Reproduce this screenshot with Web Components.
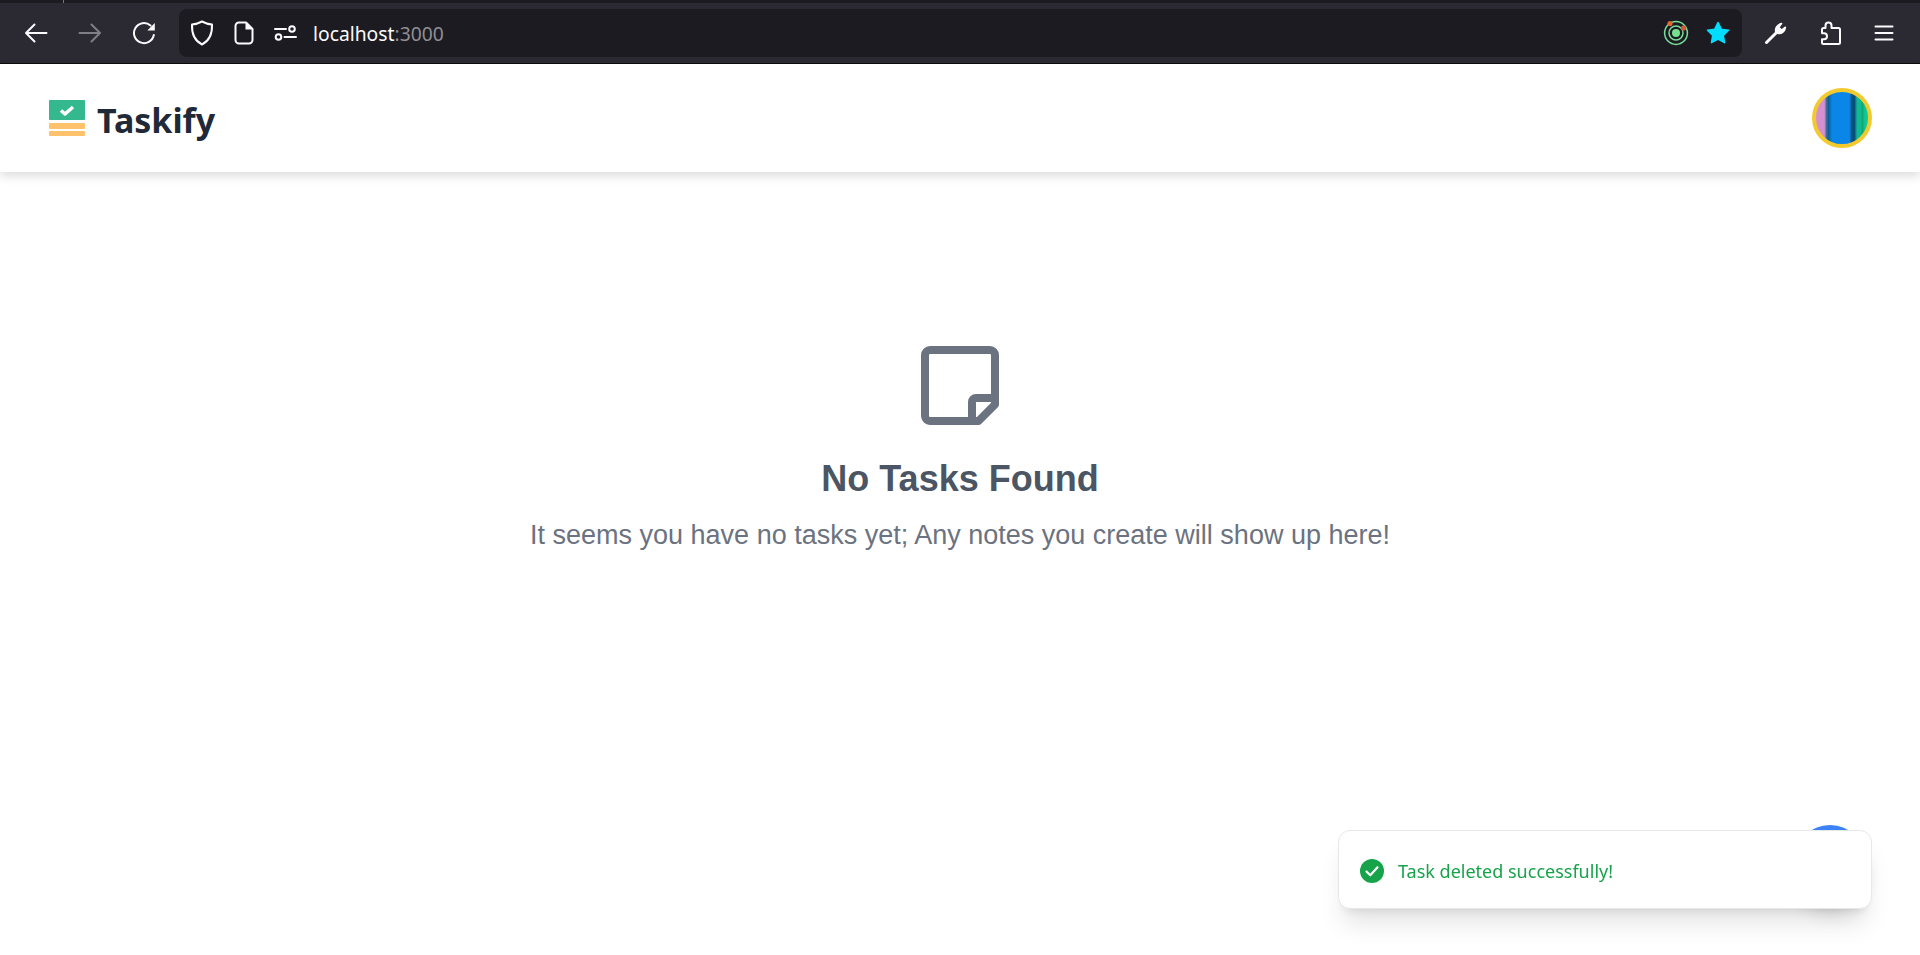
<!DOCTYPE html>
<html lang="en">
<head>
<meta charset="utf-8">
<title>Taskify</title>
<style>
    html, body { margin: 0; height: 100%; background: #ffffff; overflow: hidden; }
    body { display: flex; flex-direction: column; font-family: "Liberation Sans", sans-serif; }
</style>
</head>
<body>
<browser-bar url-host="localhost" url-port=":3000"></browser-bar>
<app-nav title-text="Taskify"></app-nav>
<empty-state heading="No Tasks Found">It seems you have no tasks yet; Any notes you create will show up here!</empty-state>
<add-fab></add-fab>
<app-toast>Task deleted successfully!</app-toast>

<script>
class BrowserBar extends HTMLElement {
    constructor() {
        super();
        const shadow = this.attachShadow({ mode: 'open' });
        shadow.innerHTML = `
            <style>
                :host { display: block; flex: none; background: #2b2a33; color: #fbfbfe; }
                .strip { height: 3px; background: #1c1b22; position: relative; }
                .strip i { position: absolute; left: 63px; top: 0; width: 1px; height: 3px; background: #77767e; }
                .bar { display: flex; align-items: center; height: 60px; padding: 0 9px; border-bottom: 1px solid #0c0c0d; }
                .btn { flex: none; width: 54px; height: 48px; display: flex; align-items: center; justify-content: center; }
                .btn.off { opacity: .4; }
                .url {
                    flex: 1; height: 48px; margin: 0 7px 0 8px; padding: 0 3px 0 2px; background: #1c1b22; border-radius: 8px;
                    display: flex; align-items: center;
                }
                .ico { flex: none; width: 42px; height: 48px; display: flex; align-items: center; justify-content: center; }
                .text { flex: 1; margin-left: 6px; font: 19.300px "Noto Sans", sans-serif; white-space: nowrap; }
                .text span { color: #8f8f94; }
                svg { display: block; fill: none; stroke: currentColor; stroke-width: 2; stroke-linecap: round; stroke-linejoin: round; }
            </style>
            <div class="strip"><i></i></div>
            <div class="bar">
                <div class="btn"><svg width="24" height="24" viewBox="0 0 24 24" stroke-width="2.2"><path d="M22.500 12H2M10.500 3.500 2 12l8.500 8.500" /></svg></div>
                <div class="btn off"><svg width="24" height="24" viewBox="0 0 24 24"><path d="M1.500 12H22M13.500 3.500 22 12l-8.500 8.500" /></svg></div>
                <div class="btn"><svg width="24" height="24" viewBox="0 0 24 24"><path d="M21.800 14A10 10 0 1 1 18.500 4.500" /><path d="M22.800 2v7.500h-7.500z" fill="currentColor" stroke="none" /></svg></div>
                <div class="url">
                    <div class="ico"><svg width="24" height="26" viewBox="0 0 24 26" stroke-width="1.800"><path d="M12 1.500c3 1.600 6 2.600 10 3 .4 9-3.200 16.500-10 20C5.200 21 1.600 13.500 2 4.500c4-.4 7-1.400 10-3z" /></svg></div>
                    <div class="ico"><svg width="20" height="24" viewBox="0 0 20 24" stroke-width="1.800"><path d="M12 1.500H5A3.500 3.500 0 0 0 1.500 5v14A3.500 3.500 0 0 0 5 22.500h10a3.500 3.500 0 0 0 3.500-3.500V8z" /><path d="M11.500 1.500h1.500l5.500 5.500v1.500h-7z" fill="currentColor" stroke="none" /></svg></div>
                    <div class="ico"><svg width="24" height="18" viewBox="0 0 24 18" stroke-width="1.800"><path d="M1 5h11M10.500 13H22" /><circle cx="18" cy="5" r="2.800" /><circle cx="4.500" cy="13" r="2.800" /></svg></div>
                    <div class="text" id="addr"></div>
                    <div class="ico"><svg width="26" height="26" viewBox="0 0 26 26" style="stroke:#77dd99"><circle cx="13" cy="13" r="11.400" stroke-width="1.500" /><circle cx="13" cy="13" r="7" stroke-width="1.500" /><circle cx="13" cy="13" r="4" fill="#77e08f" stroke="none" /><circle cx="7" cy="3.500" r="2.600" fill="#e06a32" stroke="none" /><circle cx="20.500" cy="8" r="2.600" fill="#d8543a" stroke="none" /></svg></div>
                    <div class="ico"><svg width="26" height="26" viewBox="0 0 26 26"><path d="M13 2.500l3.200 6.700 7.300 1-5.300 5.100 1.300 7.300L13 19.100l-6.500 3.500 1.300-7.300-5.300-5.100 7.300-1z" fill="#00ddff" stroke="#00ddff" stroke-width="1.600" /></svg></div>
                </div>
                <div class="btn"><svg width="24" height="24" viewBox="0 0 24 24"><path d="M2.500 21.500 12.800 11.200" stroke-width="3" /><path d="M12 11.500c-1.400-3.500.6-8 5.600-9l-2.800 3.800 2.800 2.700 3.800-2.800c-.4 5-5 7.500-8.200 5.800z" fill="currentColor" stroke-width="1.500" /></svg></div>
                <div class="btn"><svg width="24" height="26" viewBox="0 0 24 26"><path d="M13.500 8V5.500a3 3 0 1 0-6 0V8H5.500A1.500 1.500 0 0 0 4 9.500v3.700h2a3 3 0 1 1 0 6H4v3.300A1.500 1.500 0 0 0 5.500 24H20.500a1.500 1.500 0 0 0 1.500-1.500V9.500A1.500 1.500 0 0 0 20.500 8z" /></svg></div>
                <div class="btn"><svg width="24" height="24" viewBox="0 0 24 24"><path d="M3.500 5.500h17M3.500 12h17M3.500 18.500h17" /></svg></div>
            </div>
        `;
        const addr = shadow.querySelector('#addr');
        addr.textContent = this.getAttribute('url-host');
        const port = document.createElement('span');
        port.textContent = this.getAttribute('url-port');
        addr.appendChild(port);
    }
}
customElements.define('browser-bar', BrowserBar);

class AppNav extends HTMLElement {
    constructor() {
        super();
        const shadow = this.attachShadow({ mode: 'open' });
        shadow.innerHTML = `
            <style>
                :host {
                    display: flex; flex: none; align-items: center; justify-content: space-between;
                    height: 108px; padding: 0 48px 0 49px; background: #ffffff; position: relative; z-index: 1;
                    box-shadow: 0 4px 10px rgba(0,0,0,.14);
                }
                .brand { display: flex; align-items: center; gap: 12px; }
                h1 { margin: 3px 0 0; font: 700 34px "Noto Sans", sans-serif; color: #1f2937; }
                .avatar {
                    width: 52px; height: 52px; border: 4px solid #f3ca2e; border-radius: 50%;
                    background: linear-gradient(90deg, #d68fd0 0 16%, #3f6f9c 20%, #0d5f96 24%, #0a86e8 31% 64%, #0a4f7c 69% 74%, #10b894 79% 86%, #12a468 89%, #10c79a 94%);
                }
            </style>
            <div class="brand">
                <svg width="36" height="36" viewBox="0 0 36 36">
                    <rect y="0" width="36" height="20" rx="1" fill="#34b98f" />
                    <path d="M12 10.500l4 3.500 8-7" fill="none" stroke="#ffffff" stroke-width="3.500" stroke-linejoin="round" />
                    <rect y="23" width="36" height="6" rx="1" fill="#fdc26b" />
                    <rect y="31" width="36" height="5" rx="1" fill="#fdc26b" />
                </svg>
                <h1></h1>
            </div>
            <div class="avatar"></div>
        `;
        shadow.querySelector('h1').textContent = this.getAttribute('title-text');
    }
}
customElements.define('app-nav', AppNav);

class EmptyState extends HTMLElement {
    constructor() {
        super();
        const shadow = this.attachShadow({ mode: 'open' });
        shadow.innerHTML = `
            <style>
                :host { display: flex; flex: 1; flex-direction: column; align-items: center; padding-top: 174px; text-align: center; }
                svg { display: block; margin-bottom: 33px; }
                h2 { margin: 0 0 20px; font: 700 36px/40px "Liberation Sans", sans-serif; color: #4b5563; }
                p { margin: 0; font: 27px/32px "Liberation Sans", sans-serif; color: #6b7280; }
            </style>
            <svg width="80" height="80" viewBox="0 0 80 80" fill="none" stroke="#6b7280" stroke-width="8" stroke-linejoin="round">
                <path d="M5 9a5 5 0 0 1 5-5h60a5 5 0 0 1 5 5v49.500L58.500 75H10a5 5 0 0 1-5-5z" />
                <path d="M74 52H56a4 4 0 0 0-4 4v19" />
            </svg>
            <h2></h2>
            <p><slot></slot></p>
        `;
        shadow.querySelector('h2').textContent = this.getAttribute('heading');
    }
}
customElements.define('empty-state', EmptyState);

class AddFab extends HTMLElement {
    constructor() {
        super();
        const shadow = this.attachShadow({ mode: 'open' });
        shadow.innerHTML = `
            <style>
                :host {
                    position: fixed; left: 1794px; top: 825px; width: 72px; height: 72px; border-radius: 50%;
                    background: #3b82f6; box-shadow: 0 10px 15px -3px rgba(0,0,0,.1), 0 4px 6px -4px rgba(0,0,0,.1), 0 20px 25px -5px rgba(0,0,0,.15);
                }
            </style>
        `;
    }
}
customElements.define('add-fab', AddFab);

class AppToast extends HTMLElement {
    constructor() {
        super();
        const shadow = this.attachShadow({ mode: 'open' });
        shadow.innerHTML = `
            <style>
                :host {
                    position: fixed; left: 1338px; top: 830px; width: 534px; height: 79px; box-sizing: border-box;
                    display: flex; align-items: center; gap: 14px; padding: 2px 21px 0;
                    background: #ffffff; border: 1px solid #e5e7eb; border-radius: 12px;
                    box-shadow: 0 20px 25px -5px rgba(0,0,0,.1), 0 8px 10px -6px rgba(0,0,0,.1);
                    font: 18px "Noto Sans", sans-serif; color: #16a34a;
                }
                svg { display: block; flex: none; }
            </style>
            <svg width="24" height="24" viewBox="0 0 24 24">
                <circle cx="12" cy="12" r="12" fill="#16a34a" />
                <path d="M6.500 12.500l3.800 3.800 7.200-8" fill="none" stroke="#ffffff" stroke-width="2.200" stroke-linecap="round" stroke-linejoin="round" />
            </svg>
            <span><slot></slot></span>
        `;
    }
}
customElements.define('app-toast', AppToast);
</script>
</body>
</html>
